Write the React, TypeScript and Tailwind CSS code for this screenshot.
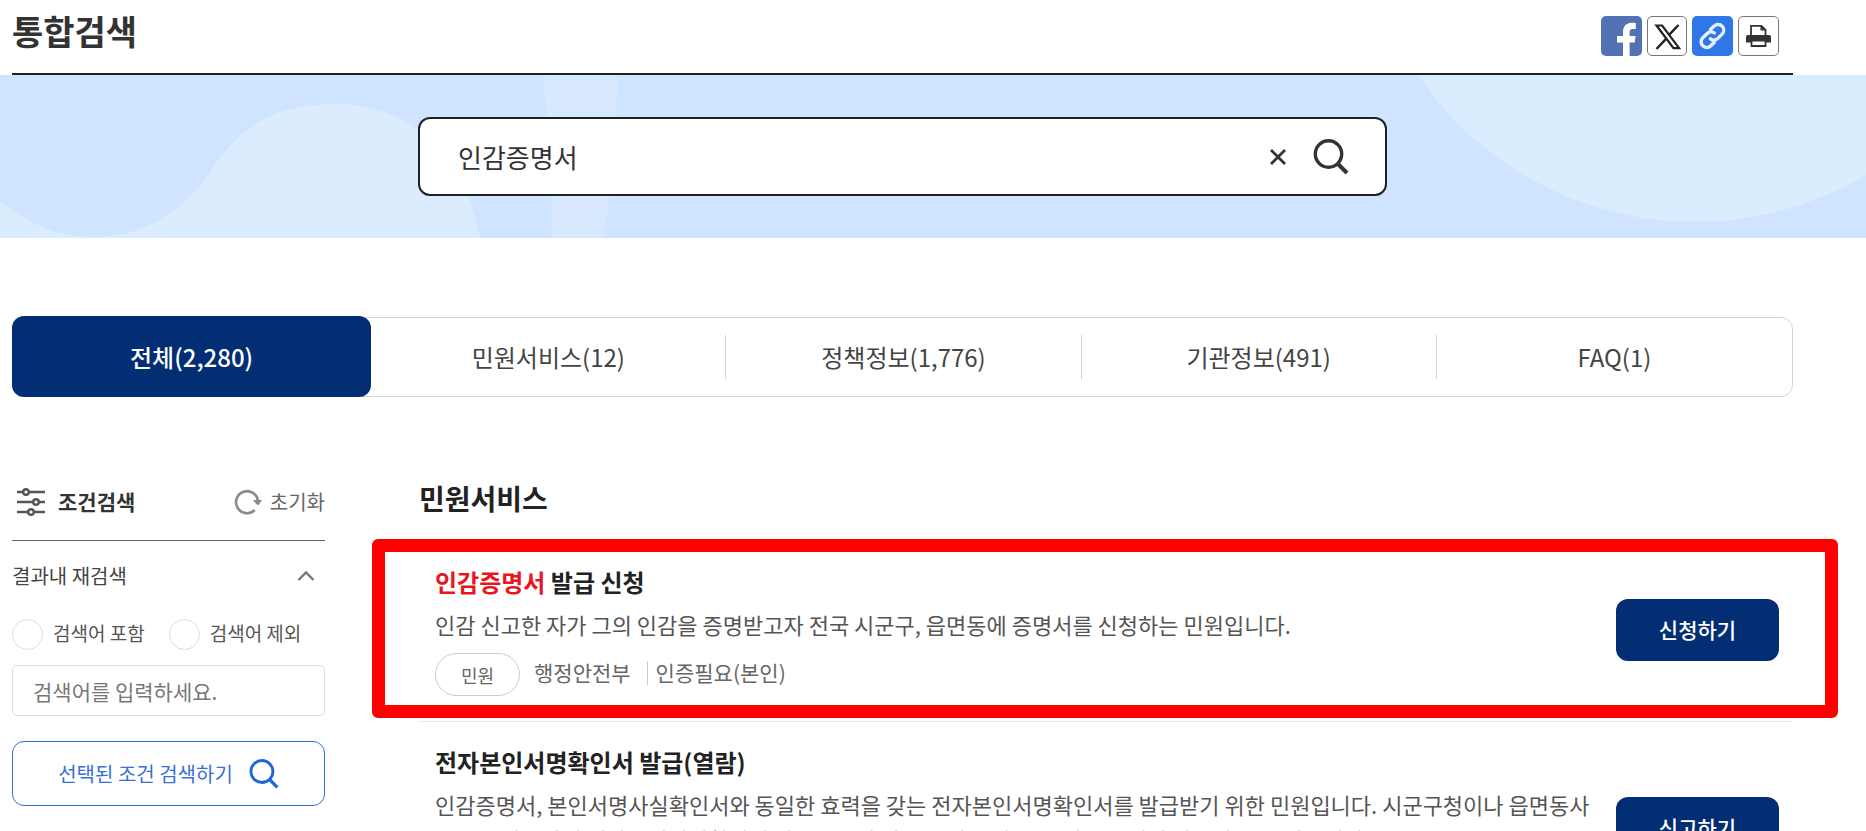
import React from 'react';

interface Service {
  id: number;
  keyword?: string;
  title: string;
  description: string;
  tag: string;
  agency: string;
  auth: string;
  action: string;
  highlighted?: boolean;
}

const tabs = ['전체(2,280)', '민원서비스(12)', '정책정보(1,776)', '기관정보(491)', 'FAQ(1)'];

const services: Service[] = [
  {
    id: 1,
    keyword: '인감증명서',
    title: ' 발급 신청',
    description: '인감 신고한 자가 그의 인감을 증명받고자 전국 시군구, 읍면동에 증명서를 신청하는 민원입니다.',
    tag: '민원',
    agency: '행정안전부',
    auth: '인증필요(본인)',
    action: '신청하기',
    highlighted: true,
  },
  {
    id: 2,
    title: '전자본인서명확인서 발급(열람)',
    description:
      '인감증명서, 본인서명사실확인서와 동일한 효력을 갖는 전자본인서명확인서를 발급받기 위한 민원입니다. 시군구청이나 읍면동사무소를 방문하여 전자본인서명확인서 발급시스템 이용 승인을 받은 후 정부24에서 발급받을 수 있습니다.',
    tag: '민원',
    agency: '행정안전부',
    auth: '인증필요(본인)',
    action: '신고하기',
  },
];

const SearchIcon = ({ className }: { className: string }) => (
  <svg viewBox="0 0 36 36" className={className} fill="none" stroke="currentColor" strokeWidth="3.4">
    <circle cx="15.500" cy="15" r="13.200" />
    <path d="M24.500 24.500l9.500 9.500" strokeWidth="4" />
  </svg>
);

const ShareButtons = () => (
  <div className="flex gap-[5px]">
    <button aria-label="페이스북 공유" className="h-10 w-[41px] overflow-hidden rounded-[5px] bg-[#5272b4]">
      <svg viewBox="0 0 41 40" className="h-full w-full">
        <path
          d="M22 40V26.500h-6v-6.500h6v-3.800c0-6 3.200-9.400 8.800-9.400 1.800 0 3.200.1 4 .3v6h-2.800c-2.600 0-3.400 1.200-3.400 3.300v3.600h6l-.9 6.500h-5.100V40z"
          fill="#fff"
        />
      </svg>
    </button>
    <button aria-label="X 공유" className="h-10 w-10 rounded-[5px] border border-[#777] bg-white">
      <svg viewBox="0 0 38 38" className="h-full w-full" fill="none" stroke="#222">
        <path d="M8.500 8.500h5.600l17 22.600h-5.600z" strokeWidth="2.200" />
        <path d="M30.500 8L20.800 18.200M18.200 21.600L8.500 32" strokeWidth="2.400" />
      </svg>
    </button>
    <button aria-label="링크 복사" className="h-10 w-[41px] rounded-[5px] bg-[#2f76e6]">
      <svg viewBox="0 0 41 40" className="h-full w-full" fill="none" stroke="#e6f0ff" strokeWidth="3.400" strokeLinecap="round">
        <path d="M18.500 13.500l3.600-3.400a5.600 5.600 0 0 1 8 8l-4.300 4.300a5.600 5.600 0 0 1-7.400.4" />
        <path d="M22.300 26.200l-3.500 3.600a5.600 5.600 0 0 1-8-8l4.400-4.300a5.600 5.600 0 0 1 7.200-.5" />
      </svg>
    </button>
    <button aria-label="인쇄" className="h-10 w-[41px] rounded-[5px] border border-[#777] bg-white">
      <svg viewBox="0 0 39 38" className="h-full w-full">
        <path d="M12 18V8.800h10.500l4 4V18" fill="#fff" stroke="#333" strokeWidth="1.800" />
        <path d="M21.500 8.500v5h5z" fill="#333" />
        <path d="M9 18h21a2 2 0 0 1 2 2v5.500h-25v-5.500a2 2 0 0 1 2-2z" fill="#333" />
        <path d="M12.500 23.500h14v5.500h-14z" fill="#fff" stroke="#333" strokeWidth="1.800" />
      </svg>
    </button>
  </div>
);

const BannerShapes = () => (
  <svg
    viewBox="0 0 1866 163"
    preserveAspectRatio="xMidYMid slice"
    className="absolute inset-0 h-full w-full"
    aria-hidden="true"
  >
    <path d="M0 127C38 154 62 162 94 162C150 162 190 130 215 90C245 45 285 29 335 29C412 29 465 82 480 163H0z" fill="#dcecff" />
    <path d="M543 0H617Q617 90 603 163H552Q553 80 543 0z" fill="#d8e9ff" />
    <circle cx="1695" cy="-187" r="334" fill="#daedff" />
  </svg>
);

const Sidebar = () => (
  <aside className="w-[313px] shrink-0">
    <div className="flex h-[78px] items-center justify-between border-b border-[#666]">
      <h2 className="flex items-center gap-3 pl-1 text-[21px] font-bold text-[#333]">
        <svg viewBox="0 0 30 30" className="size-[30px]" fill="none" stroke="#555" strokeWidth="2.400">
          <path d="M1 5h6M13 5h16M1 15h16M23 15h6M1 25h11M18 25h11" />
          <circle cx="10" cy="5" r="2.800" />
          <circle cx="20" cy="15" r="2.800" />
          <circle cx="15" cy="25" r="2.800" />
        </svg>
        조건검색
      </h2>
      <button className="flex items-center gap-2 text-xl text-[#666]">
        <svg viewBox="0 0 28 28" className="size-7" fill="none" stroke="#8a8a8a" strokeWidth="2.600">
          <path d="M20.800 22A11 11 0 1 1 24 13" />
          <path d="M19.800 12.500h7.600l-3.600 4.500z" fill="#8a8a8a" strokeWidth="1" />
        </svg>
        초기화
      </button>
    </div>
    <button className="flex h-[69px] w-full items-center justify-between pr-[10px] text-xl text-[#444]" aria-expanded="true">
      결과내 재검색
      <svg viewBox="0 0 18 12" className="h-3 w-[18px]" fill="none" stroke="#777" strokeWidth="2.400">
        <path d="M1.500 10L9 2.500L16.500 10" />
      </svg>
    </button>
    <div className="flex gap-6 pt-[9px] pb-[15px] text-[19px] leading-[27px] text-[#555]">
      {['검색어 포함', '검색어 제외'].map(label => (
        <label key={label} className="flex items-start gap-[10px]">
          <input type="radio" name="scope" className="size-[31px] appearance-none rounded-full border border-[#ddd] bg-white checked:border-[#2f76e6]" />
          {label}
        </label>
      ))}
    </div>
    <input
      type="text"
      aria-label="재검색어"
      placeholder="검색어를 입력하세요."
      className="h-[51px] w-full rounded-[5px] border border-[#ddd] px-5 text-[21px] text-[#333] placeholder:text-[#777]"
    />
    <button className="mt-[25px] flex h-[65px] w-full items-center justify-center gap-4 rounded-xl border border-[#2f6fc9] text-xl text-[#3b6fd8]">
      선택된 조건 검색하기
      <SearchIcon className="size-[30px] text-[#1d66dd]" />
    </button>
  </aside>
);

const ServiceItem = ({ service }: { service: Service }) => (
  <li className="relative flex items-center justify-between border-b border-[#e8e8e8] pt-[22px] pr-[14px] pb-[25px] pl-4">
    <div className="max-w-[1160px]">
      <h3 className="mb-[7px] text-2xl leading-9 font-bold text-[#222]">
        {service.keyword && <span className="text-[#e8171f]">{service.keyword}</span>}
        {service.title}
      </h3>
      <p className="mb-[11px] text-[22px] leading-[35px] break-all text-[#555]">{service.description}</p>
      <div className="flex items-start text-[21px] leading-[39px] text-[#666]">
        <span className="mr-[14px] flex h-[43px] w-[85px] items-center justify-center rounded-full border border-[#ccc] text-lg">
          {service.tag}
        </span>
        <span className="mr-4">{service.agency}</span>
        <span className="mt-2 mr-2 h-6 w-px bg-[#ccc]" />
        <span>{service.auth}</span>
      </div>
    </div>
    <button className="h-[62px] w-[163px] shrink-0 rounded-xl bg-[#032e73] text-[21px] font-medium text-white">
      {service.action}
    </button>
    {service.highlighted && (
      <div className="pointer-events-none absolute -top-[3px] -right-[45px] bottom-[3px] -left-[47px] rounded-md border-[13px] border-[#ff0000]" />
    )}
  </li>
);

export default function App() {
  return (
    <div className="overflow-x-hidden bg-white font-['Noto_Sans_CJK_KR',sans-serif]">
      <header className="pr-[73px] pl-3">
        <div className="flex h-[75px] justify-between border-b-2 border-[#1e2124] pr-[14px]">
          <h1 className="text-[34px] leading-[62px] font-bold text-[#333]">통합검색</h1>
          <div className="pt-4">
            <ShareButtons />
          </div>
        </div>
      </header>

      <section className="relative bg-[#cfe5ff] py-[42px] pr-[73px] pl-3">
        <BannerShapes />
        <form className="relative mx-auto flex h-[79px] max-w-[969px] items-center rounded-xl border-2 border-[#1e2124] bg-white pr-9 pl-[38px]">
          <input
            type="text"
            aria-label="검색어"
            defaultValue="인감증명서"
            className="min-w-0 flex-1 bg-transparent text-[26px] text-[#333] outline-none"
          />
          <button type="button" aria-label="지우기" className="mr-[26px]">
            <svg viewBox="0 0 18 18" className="size-[18px]" fill="none" stroke="#333" strokeWidth="2.800">
              <path d="M2 2l14 14M16 2L2 16" />
            </svg>
          </button>
          <button type="submit" aria-label="검색">
            <SearchIcon className="size-9 text-[#333]" />
          </button>
        </form>
      </section>

      <div className="pt-[79px] pr-[73px] pl-3">
        <nav className="flex h-20 rounded-xl border border-[#d5d5d5]">
          {tabs.map((tab, i) =>
            i === 0 ? (
              <button key={tab} className="-mt-[2px] -mb-px -ml-px flex-[360] rounded-xl bg-[#032e73] text-2xl font-medium text-white">
                {tab}
              </button>
            ) : (
              <div key={tab} className="flex flex-[356] items-center">
                <button className="h-full flex-1 text-2xl text-[#444]">{tab}</button>
                {i < tabs.length - 1 && <span className="h-11 w-px bg-[#d5d5d5]" />}
              </div>
            )
          )}
        </nav>

        <div className="flex gap-[94px] pt-[66px]">
          <Sidebar />
          <main className="min-w-0 flex-1">
            <h2 className="pt-[15px] pb-[24px] text-[28px] leading-10 font-bold text-[#222]">민원서비스</h2>
            <ul>
              {services.map(service => (
                <ServiceItem key={service.id} service={service} />
              ))}
            </ul>
          </main>
        </div>
      </div>
    </div>
  );
}
